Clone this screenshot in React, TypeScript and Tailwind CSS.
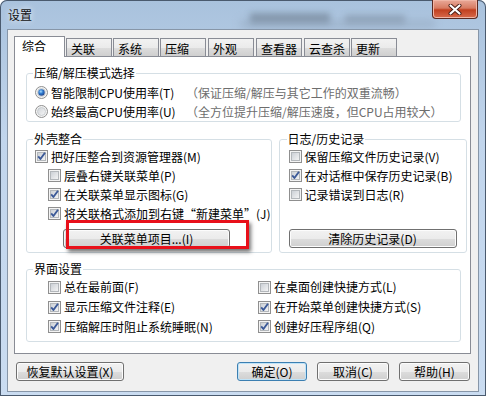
import React from 'react';

function Check({ on }: { on?: boolean }) {
  return (
    <svg width="13" height="13" viewBox="0 0 13 13" className="shrink-0">
      <defs>
        <linearGradient id="cbFill" x1="0" y1="0" x2="1" y2="1">
          <stop offset="0" stopColor="#c9ced4" />
          <stop offset="1" stopColor="#f6f6f6" />
        </linearGradient>
      </defs>
      <rect x="0.5" y="0.5" width="12" height="12" fill="#f4f4f4" stroke="#8f8f8f" />
      <rect x="2.5" y="2.5" width="8" height="8" fill="url(#cbFill)" stroke="#b3b7bb" />
      {on && <path d="M3.2 6.4 L5.4 9 L10 2.8" stroke="#3c5a98" strokeWidth="1.9" fill="none" strokeLinejoin="round" />}
    </svg>
  );
}

function Radio({ on }: { on?: boolean }) {
  return (
    <svg width="13" height="13" viewBox="0 0 13 13" className="shrink-0">
      <defs>
        <linearGradient id="rdFill" x1="0" y1="0" x2="1" y2="1">
          <stop offset="0" stopColor="#cfd3d8" />
          <stop offset="1" stopColor="#f7f7f7" />
        </linearGradient>
        <radialGradient id="rdDot" cx="0.4" cy="0.35" r="0.7">
          <stop offset="0" stopColor="#a8ddff" />
          <stop offset="0.45" stopColor="#2f7bd0" />
          <stop offset="1" stopColor="#1d3f86" />
        </radialGradient>
      </defs>
      <circle cx="6.5" cy="6.5" r="6" fill="#f4f4f4" stroke="#8f8f8f" />
      <circle cx="6.5" cy="6.5" r="4" fill="url(#rdFill)" stroke="#c2c6ca" strokeWidth="0.8" />
      {on && <circle cx="6.5" cy="6.5" r="3.2" fill="url(#rdDot)" />}
    </svg>
  );
}

function Row({ on, label, indent }: { on?: boolean; label: string; indent?: boolean }) {
  return (
    <div className={indent ? 'flex items-center h-[19px] ml-[13px]' : 'flex items-center h-[19px]'}>
      <Check on={on} />
      <span className="ml-[3px] whitespace-nowrap">{label}</span>
    </div>
  );
}

function Btn({ children, className, primary }: { children: React.ReactNode; className: string; primary?: boolean }) {
  const base =
    'flex items-center justify-center h-[19px] rounded-[3px] border whitespace-nowrap bg-[linear-gradient(#f2f2f2,#ebebeb_50%,#dddddd_50%,#cfcfcf)]';
  const edge = primary
    ? 'border-[#3c7fb1] shadow-[inset_0_0_0_1px_#bfe3f8]'
    : 'border-[#707070] shadow-[inset_0_0_0_1px_#fcfcfc]';
  return <div className={`${base} ${edge} ${className}`}>{children}</div>;
}

const tabs = [
  { label: '关联', ml: 'ml-[1px]' },
  { label: '系统', ml: 'ml-[1px]' },
  { label: '压缩', ml: 'ml-[1px]' },
  { label: '外观', ml: 'ml-[2px]' },
  { label: '查看器', ml: 'ml-[2px]' },
  { label: '云查杀', ml: 'ml-[2px]' },
  { label: '更新', ml: 'ml-[1px]' },
];

export default function App() {
  return (
    <div className="relative w-[486px] h-[396px] overflow-hidden rounded-t-[7px] bg-[linear-gradient(180deg,#a9c2dd_0%,#c1d5ec_35%,#cadcf1_100%)] shadow-[inset_0_0_0_1px_#4a5a6e] font-['Noto_Sans_CJK_SC','Noto_Sans',sans-serif] text-[12px] leading-[12px] text-black">
      {/* blurred windows behind the glass */}
      <div className="absolute left-[250px] top-[13px] w-[80px] h-[11px] bg-[#5d6c7d] opacity-50 blur-[3px]" />
      <div className="absolute left-[345px] top-[15px] w-[60px] h-[9px] bg-[#6c7a8a] opacity-40 blur-[3px]" />
      <div className="absolute left-[240px] top-[20px] w-[195px] h-[8px] bg-[#8fa3b9] opacity-50 blur-[4px]" />

      {/* title bar */}
      <div className="relative flex h-[29px]">
        <div className="pl-[8px] pt-[9px] text-[#111] [text-shadow:0_0_6px_#ffffff]">设置</div>
        <div className="ml-auto mr-[8px] flex items-center justify-center w-[46px] h-[19px] rounded-b-[4px] border border-t-0 border-[#5b2a22] bg-[linear-gradient(180deg,#e9a998_0%,#d77b62_45%,#c1401f_55%,#d86a4c_100%)] shadow-[inset_0_0_0_1px_#f0b6a6]">
          <svg width="14" height="11" viewBox="0 0 14 11">
            <path d="M2.5 1.5 L11.5 9.5 M11.5 1.5 L2.5 9.5" stroke="#4a1d15" strokeWidth="4" strokeLinecap="round" />
            <path d="M2.5 1.5 L11.5 9.5 M11.5 1.5 L2.5 9.5" stroke="#ffffff" strokeWidth="2.2" strokeLinecap="round" />
          </svg>
        </div>
      </div>

      {/* client area */}
      <div className="relative ml-[7px] w-[472px] h-[363px] border border-[#8796a8] bg-[#f0f0f0] pl-[6px] pt-[6px]">
        {/* tabs */}
        <div className="flex items-end h-[20px]">
          <div className="relative z-10 -mb-[1px] w-[51px] h-[21px] border border-b-0 border-[#898c95] bg-white pl-[7px] pt-[3px]">
            综合
          </div>
          {tabs.map((t) => (
            <div
              key={t.label}
              className={`${t.ml} w-[46px] h-[18px] border border-b-0 border-[#898c95] bg-[linear-gradient(#f2f2f2,#ebebeb_50%,#dddddd_50%,#cfcfcf)] pl-[4px] pt-[4px]`}
            >
              {t.label}
            </div>
          ))}
        </div>

        {/* tab page */}
        <div className="relative w-[457px] h-[298px] border border-[#898c95] bg-white pl-[11px] pt-[10px]">
          <fieldset className="w-[435px] rounded-[3px] border border-[#d5dfe5]">
            <legend className="ml-[6px] px-[1px]">压缩/解压模式选择</legend>
            <div className="pl-[8px] pt-[4px]">
              <div className="flex items-center h-[19px]">
                <Radio on />
                <span className="ml-[3px] w-[135px] whitespace-nowrap">智能限制CPU使用率(T)</span>
                <span className="text-[#6d6d6d] whitespace-nowrap">（保证压缩/解压与其它工作的双重流畅）</span>
              </div>
              <div className="flex items-center h-[19px]">
                <Radio />
                <span className="ml-[3px] w-[135px] whitespace-nowrap">始终最高CPU使用率(U)</span>
                <span className="text-[#6d6d6d] whitespace-nowrap">（全方位提升压缩/解压速度，但CPU占用较大）</span>
              </div>
            </div>
          </fieldset>

          <div className="flex mt-[11px] gap-[7px]">
            <fieldset className="w-[240px] rounded-[3px] border border-[#d5dfe5]">
              <legend className="ml-[6px] px-[1px]">外壳整合</legend>
              <div className="pl-[8px] pt-[2px] pb-[4px]">
                <Row on label="把好压整合到资源管理器(M)" />
                <Row indent label="层叠右键关联菜单(P)" />
                <Row indent on label="在关联菜单显示图标(G)" />
                <Row indent on label="将关联格式添加到右键“新建菜单”(J)" />
                <Btn className="mt-[6px] ml-[28px] w-[167px]">关联菜单项目...(I)</Btn>
              </div>
            </fieldset>
            <fieldset className="w-[188px] rounded-[3px] border border-[#d5dfe5]">
              <legend className="ml-[7px] px-[1px]">日志/历史记录</legend>
              <div className="pl-[9px] pt-[2px] pb-[4px]">
                <Row label="保留压缩文件历史记录(V)" />
                <Row on label="在对话框中保存历史记录(B)" />
                <Row label="记录错误到日志(R)" />
                <Btn className="mt-[25px] w-[168px]">清除历史记录(D)</Btn>
              </div>
            </fieldset>
          </div>

          <fieldset className="mt-[10px] w-[435px] rounded-[3px] border border-[#d5dfe5]">
            <legend className="ml-[6px] px-[1px]">界面设置</legend>
            <div className="grid grid-cols-[210px_1fr] grid-rows-[20px_20px_19px] items-center pl-[21px] pt-[2px] pb-[5px]">
              <Row label="总在最前面(F)" />
              <Row label="在桌面创建快捷方式(L)" />
              <Row on label="显示压缩文件注释(E)" />
              <Row on label="在开始菜单创建快捷方式(S)" />
              <Row on label="压缩解压时阻止系统睡眠(N)" />
              <Row on label="创建好压程序组(Q)" />
            </div>
          </fieldset>

          {/* red annotation box */}
          <div className="absolute left-[51px] top-[163px] w-[183px] h-[29px] border-[3px] border-[#e8101a] shadow-[2px_3px_4px_rgba(0,0,0,0.55)]" />
        </div>

        {/* dialog buttons */}
        <div className="flex mt-[8px]">
          <Btn className="ml-[2px] w-[108px]">恢复默认设置(X)</Btn>
          <Btn primary className="ml-[113px] w-[70px]">确定(O)</Btn>
          <Btn className="ml-[10px] w-[72px]">取消(C)</Btn>
          <Btn className="ml-[10px] w-[71px]">帮助(H)</Btn>
        </div>
      </div>
    </div>
  );
}
